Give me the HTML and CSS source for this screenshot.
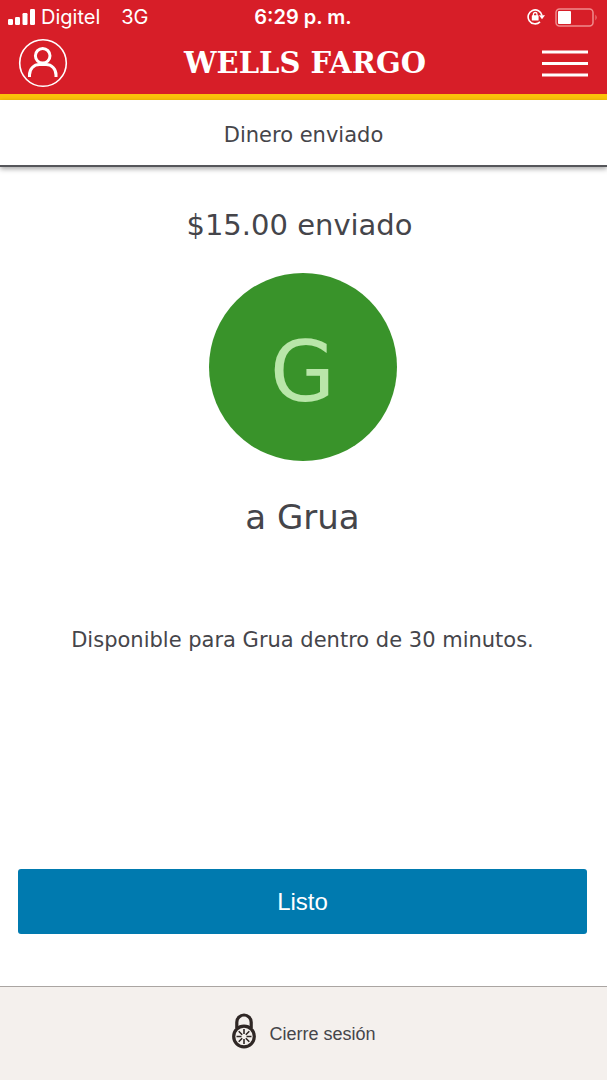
FILE: index.html
```html
<!DOCTYPE html>
<html lang="es">
<head>
<meta charset="utf-8">
<meta name="viewport" content="width=device-width, initial-scale=1">
<title>Dinero enviado</title>
<link rel="stylesheet" href="styles.css">
</head>
<body>
<div class="app">
  <header class="masthead">
    <div class="status">
      <div class="status-left">
        <svg class="signal" viewBox="0 0 27 16" aria-hidden="true"><g fill="#fff"><rect x="0" y="10" width="5" height="6" rx="1.2"/><rect x="7" y="8" width="5" height="8" rx="1.2"/><rect x="14.500" y="4" width="5" height="12" rx="1.2"/><rect x="22" y="0" width="5" height="16" rx="1.2"/></g></svg>
        <span class="carrier">Digitel</span>
        <span class="network">3G</span>
      </div>
      <span class="clock">6:29 p. m.</span>
      <div class="status-right">
        <svg class="rotation" viewBox="0 0 18 18" fill="none" stroke="#fff" stroke-width="1.6" aria-hidden="true"><path d="M15 7.500A7 7 0 1 0 13 13.900"/><path d="M12 7.300h6l-3 4z" fill="#fff" stroke="none"/><rect x="4.800" y="7.300" width="6.800" height="5.200" rx=".6" fill="#fff" stroke="none"/><path d="M6.400 8V6.300a1.800 1.800 0 0 1 3.600 0V8" stroke-width="1.300"/></svg>
        <svg class="battery" viewBox="0 0 43 19" aria-hidden="true"><rect x="1" y="1" width="37" height="17" rx="3.500" fill="none" stroke="#f08c8d" stroke-width="1.500"/><rect x="3" y="3" width="13" height="13" rx="1" fill="#fff"/><path d="M40.500 6.500q2.200 3 0 6z" fill="#f08c8d"/></svg>
      </div>
    </div>
    <nav class="navbar">
      <button class="icon-button" type="button" aria-label="Perfil">
        <svg class="profile" viewBox="0 0 50 50" fill="none" stroke="#fff" aria-hidden="true"><circle cx="25" cy="25" r="23.300" stroke-width="1.600"/><circle cx="24.700" cy="17.800" r="7.300" stroke-width="3"/><path d="M11.500 39v-2c0-6 4.300-10.400 10-10.400h6.500c5.700 0 10 4.400 10 10.400v2" stroke-width="3"/></svg>
      </button>
      <a class="brand" href="#">WELLS FARGO</a>
      <button class="icon-button" type="button" aria-label="Menú">
        <svg class="menu" viewBox="0 0 46 27" aria-hidden="true"><path d="M0 2h46M0 13.500h46M0 25h46" stroke="#fff" stroke-width="3"/></svg>
      </button>
    </nav>
  </header>
  <div class="title-bar"><h1 class="title">Dinero enviado</h1></div>
  <main class="content">
    <h2 class="amount">$15.00 enviado</h2>
    <div class="avatar" aria-hidden="true">G</div>
    <p class="recipient">a Grua</p>
    <p class="notice">Disponible para Grua dentro de 30 minutos.</p>
    <button class="done" type="button">Listo</button>
  </main>
  <footer class="footer">
    <a class="logout" href="#">
      <svg class="lock" viewBox="0 0 26 36" fill="none" stroke="#2f2725" aria-hidden="true"><path d="M5.800 15V9.200a7.200 7.200 0 0 1 14.400 0V15" stroke-width="3.200"/><circle cx="13" cy="23.500" r="10.300" stroke-width="3.200"/><path d="M13 16v5M13 26v5M5.500 23.500h5M15.500 23.500h5M7.700 18.200l3.500 3.500M14.800 25.300l3.500 3.500M18.300 18.200l-3.500 3.500M11.200 25.300l-3.500 3.500" stroke-width="1.600"/></svg>
      <span>Cierre sesión</span>
    </a>
  </footer>
</div>
</body>
</html>
```
FILE: styles.css
```css
* {
  box-sizing: border-box;
}

body {
  margin: 0;
  background: #fff;
  color: #45454a;
  font-family: "DejaVu Sans", sans-serif;
}

h1,
h2,
p {
  margin: 0;
  font-weight: 400;
}

svg {
  display: block;
}

.app {
  display: flex;
  flex-direction: column;
  min-height: 100vh;
}

.masthead {
  background: #d71e28;
  border-bottom: 6px solid #fcc10a;
  color: #fff;
}

.status {
  display: grid;
  grid-template-columns: 1fr auto 1fr;
  align-items: center;
  height: 34px;
  padding: 0 9px 0 8px;
  font: 20px/24px Inter, sans-serif;
}

.status-left,
.status-right {
  display: flex;
  align-items: center;
}

.status-right {
  justify-content: flex-end;
  gap: 10px;
}

.signal {
  width: 27px;
  height: 16px;
}

.carrier {
  margin-left: 6px;
}

.network {
  margin-left: 21px;
}

.clock {
  font-weight: 600;
}

.rotation {
  width: 18px;
  height: 18px;
}

.battery {
  width: 43px;
  height: 19px;
}

.navbar {
  display: flex;
  align-items: center;
  justify-content: space-between;
  height: 60px;
  padding: 0 19px 2px 18px;
}

.icon-button {
  padding: 0;
  border: 0;
  background: none;
}

.profile {
  width: 50px;
  height: 50px;
}

.menu {
  width: 46px;
  height: 27px;
}

.brand {
  color: #fff;
  font: 700 29px/40px "DejaVu Serif", serif;
  text-decoration: none;
}

.title-bar {
  padding: 23px 16px 17px;
  border-bottom: 2px solid #55565a;
  box-shadow: 0 2px 5px rgba(0, 0, 0, 0.35);
  text-align: center;
}

.title {
  font-size: 21px;
  line-height: 25px;
}

.content {
  display: flex;
  flex: 1;
  flex-direction: column;
  align-items: center;
  padding: 38px 20px 52px 18px;
  text-align: center;
}

.amount {
  padding-right: 6px;
  font-size: 29px;
  line-height: 40px;
}

.avatar {
  display: flex;
  align-items: center;
  justify-content: center;
  width: 188px;
  height: 188px;
  margin-top: 28px;
  padding-top: 10px;
  border-radius: 50%;
  background: #39932a;
  color: #b9e6a9;
  font-size: 84px;
}

.recipient {
  margin-top: 36px;
  font-size: 34px;
  line-height: 40px;
}

.notice {
  margin-top: 88px;
  font-size: 21px;
  line-height: 30px;
}

.done {
  width: 100%;
  height: 65px;
  margin-top: auto;
  border: 0;
  border-radius: 3px;
  background: #007aaf;
  color: #fff;
  font: 24px/28px "Liberation Sans", sans-serif;
}

.footer {
  display: flex;
  justify-content: center;
  padding: 26px 16px 31px;
  border-top: 1px solid #aaa5a2;
  background: #f4f0ed;
}

.logout {
  display: flex;
  align-items: center;
  gap: 12px;
  color: #45454a;
  font: 18px/24px "Liberation Sans", sans-serif;
  text-decoration: none;
}

.logout span {
  padding-top: 6px;
}

.lock {
  width: 26px;
  height: 36px;
}
```
